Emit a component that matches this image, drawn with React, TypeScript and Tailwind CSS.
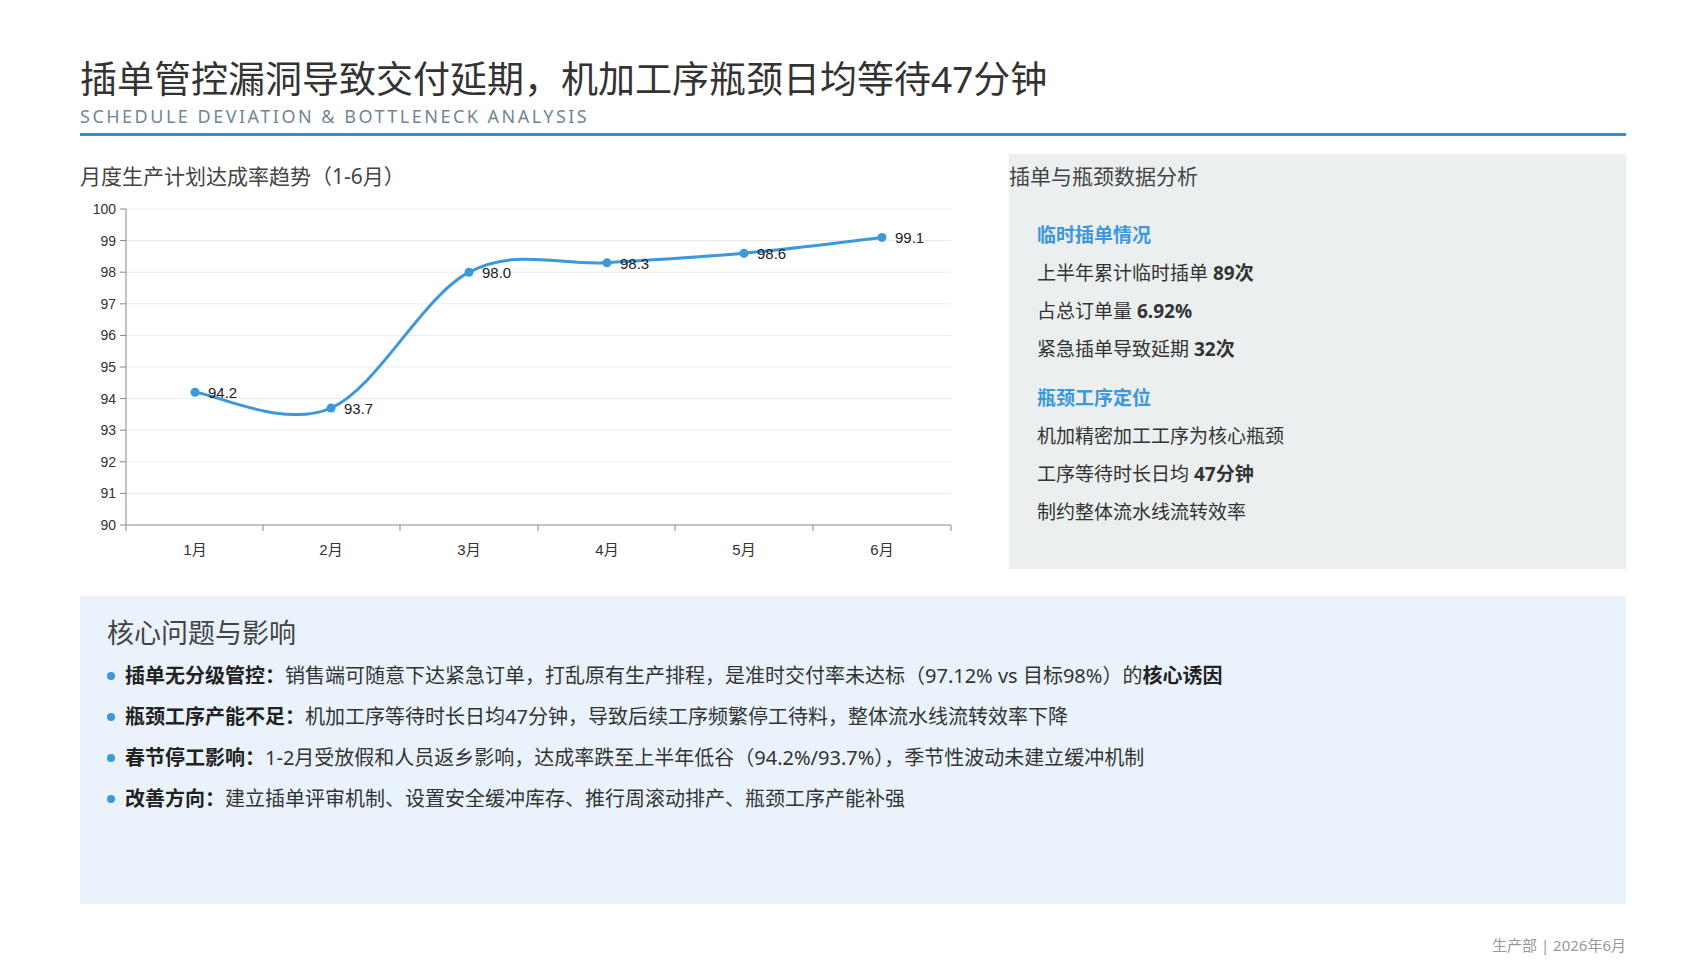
import React from "react";

const vals = [94.2, 93.7, 98.0, 98.3, 98.6, 99.1];
const xs = [115, 251, 389, 527, 664, 802];
const yOf = (v: number) => 329 - (v - 90) * 31.6;

function pathD() {
  const p = vals.map((v, i) => [xs[i], yOf(v)]);
  let d = `M${p[0][0]},${p[0][1]}`;
  for (let i = 0; i < p.length - 1; i++) {
    const p0 = p[i - 1] || p[i];
    const p1 = p[i];
    const p2 = p[i + 1];
    const p3 = p[i + 2] || p2;
    const t = 0.17;
    const c1 = [p1[0] + (p2[0] - p0[0]) * t, p1[1] + (p2[1] - p0[1]) * t];
    const c2 = [p2[0] - (p3[0] - p1[0]) * t, p2[1] - (p3[1] - p1[1]) * t];
    d += ` C${c1[0]},${c1[1]} ${c2[0]},${c2[1]} ${p2[0]},${p2[1]}`;
  }
  return d;
}

function Chart() {
  const ticks = [100, 99, 98, 97, 96, 95, 94, 93, 92, 91, 90];
  const bounds = [46, 183, 320, 458, 595, 733, 871];
  return (
    <svg width="900" height="370" className="mt-[6px]" style={{ fontFamily: "'Liberation Sans', Arial, sans-serif" }}>
      {ticks.map((t) => (
        <g key={t}>
          {t !== 90 && <line x1={46} x2={871} y1={yOf(t)} y2={yOf(t)} stroke="#ebebeb" />}
          <line x1={40} x2={46} y1={yOf(t)} y2={yOf(t)} stroke="#888" />
          <text x={36} y={yOf(t) + 5} textAnchor="end" fontSize="14" fill="#333">{t}</text>
        </g>
      ))}
      <line x1={46} x2={46} y1={13} y2={329} stroke="#888" />
      <line x1={46} x2={871} y1={329} y2={329} stroke="#888" />
      {bounds.map((b) => <line key={b} x1={b} x2={b} y1={329} y2={335} stroke="#888" />)}
      {xs.map((x, i) => (
        <text key={x} x={x} y={359} textAnchor="middle" fontSize="15" fill="#333" style={{ fontFamily: "'Liberation Sans', 'Noto Sans CJK SC', sans-serif" }}>{i + 1}月</text>
      ))}
      <path d={pathD()} fill="none" stroke="#3a98db" strokeWidth="3" />
      {vals.map((v, i) => (
        <g key={i}>
          <circle cx={xs[i]} cy={yOf(v)} r="4.5" fill="#3a98db" />
          <text x={xs[i] + 13} y={yOf(v) + 6} fontSize="15" fill="#222">{v.toFixed(1)}</text>
        </g>
      ))}
    </svg>
  );
}

const Item = ({ children }: { children: React.ReactNode }) => (
  <div className="h-[38px] flex items-center text-[19px] text-[#333]">{children}</div>
);

const Bullet = ({ label, children }: { label: string; children: React.ReactNode }) => (
  <div className="h-[41px] flex items-center text-[20px] text-[#333]">
    <span className="w-[8px] h-[8px] rounded-full bg-[#3a98db] mr-[10px]" />
    <b className="font-bold text-[#222]">{label}</b>
    <span>{children}</span>
  </div>
);

export default function App() {
  return (
    <div className="w-[1706px] h-[960px] bg-white px-[80px] flex flex-col" style={{ fontFamily: "'Noto Sans', 'Noto Sans CJK SC', sans-serif" }}>
      <div className="pt-[53px] text-[37px] leading-[52px] text-[#333]">插单管控漏洞导致交付延期，机加工序瓶颈日均等待47分钟</div>
      <div className="text-[18px] leading-[22px] tracking-[2.5px] text-[#6e8796]">SCHEDULE DEVIATION &amp; BOTTLENECK ANALYSIS</div>
      <div className="mt-[6px] h-[3px] bg-[#2f8fd8]" />
      <div className="flex mt-[18px] h-[415px]">
        <div className="flex-1">
          <div className="text-[21px] leading-[28px] text-[#444] mt-[8px]">月度生产计划达成率趋势（1-6月）</div>
          <Chart />
        </div>
        <div className="w-[617px] bg-[#ecefef] px-[28px]">
          <div className="text-[21px] leading-[28px] text-[#444] mt-[8px] -ml-[28px]">插单与瓶颈数据分析</div>
          <div className="mt-[26px] text-[19px] font-bold text-[#3a98db] h-[38px] flex items-center">临时插单情况</div>
          <Item>上半年累计临时插单&nbsp;<b>89次</b></Item>
          <Item>占总订单量&nbsp;<b>6.92%</b></Item>
          <Item>紧急插单导致延期&nbsp;<b>32次</b></Item>
          <div className="mt-[11px] text-[19px] font-bold text-[#3a98db] h-[38px] flex items-center">瓶颈工序定位</div>
          <Item>机加精密加工工序为核心瓶颈</Item>
          <Item>工序等待时长日均&nbsp;<b>47分钟</b></Item>
          <Item>制约整体流水线流转效率</Item>
        </div>
      </div>
      <div className="mt-[27px] h-[308px] bg-[#eaf3fb] px-[27px] pt-[19px]">
        <div className="text-[27px] leading-[36px] text-[#444] mb-[4px]">核心问题与影响</div>
        <Bullet label="插单无分级管控：">销售端可随意下达紧急订单，打乱原有生产排程，是准时交付率未达标（97.12% vs 目标98%）的<b className="text-[#222]">核心诱因</b></Bullet>
        <Bullet label="瓶颈工序产能不足：">机加工序等待时长日均47分钟，导致后续工序频繁停工待料，整体流水线流转效率下降</Bullet>
        <Bullet label="春节停工影响：">1-2月受放假和人员返乡影响，达成率跌至上半年低谷（94.2%/93.7%），季节性波动未建立缓冲机制</Bullet>
        <Bullet label="改善方向：">建立插单评审机制、设置安全缓冲库存、推行周滚动排产、瓶颈工序产能补强</Bullet>
      </div>
      <div className="mt-[30px] text-right text-[15px] text-[#999]">生产部 | 2026年6月</div>
    </div>
  );
}
